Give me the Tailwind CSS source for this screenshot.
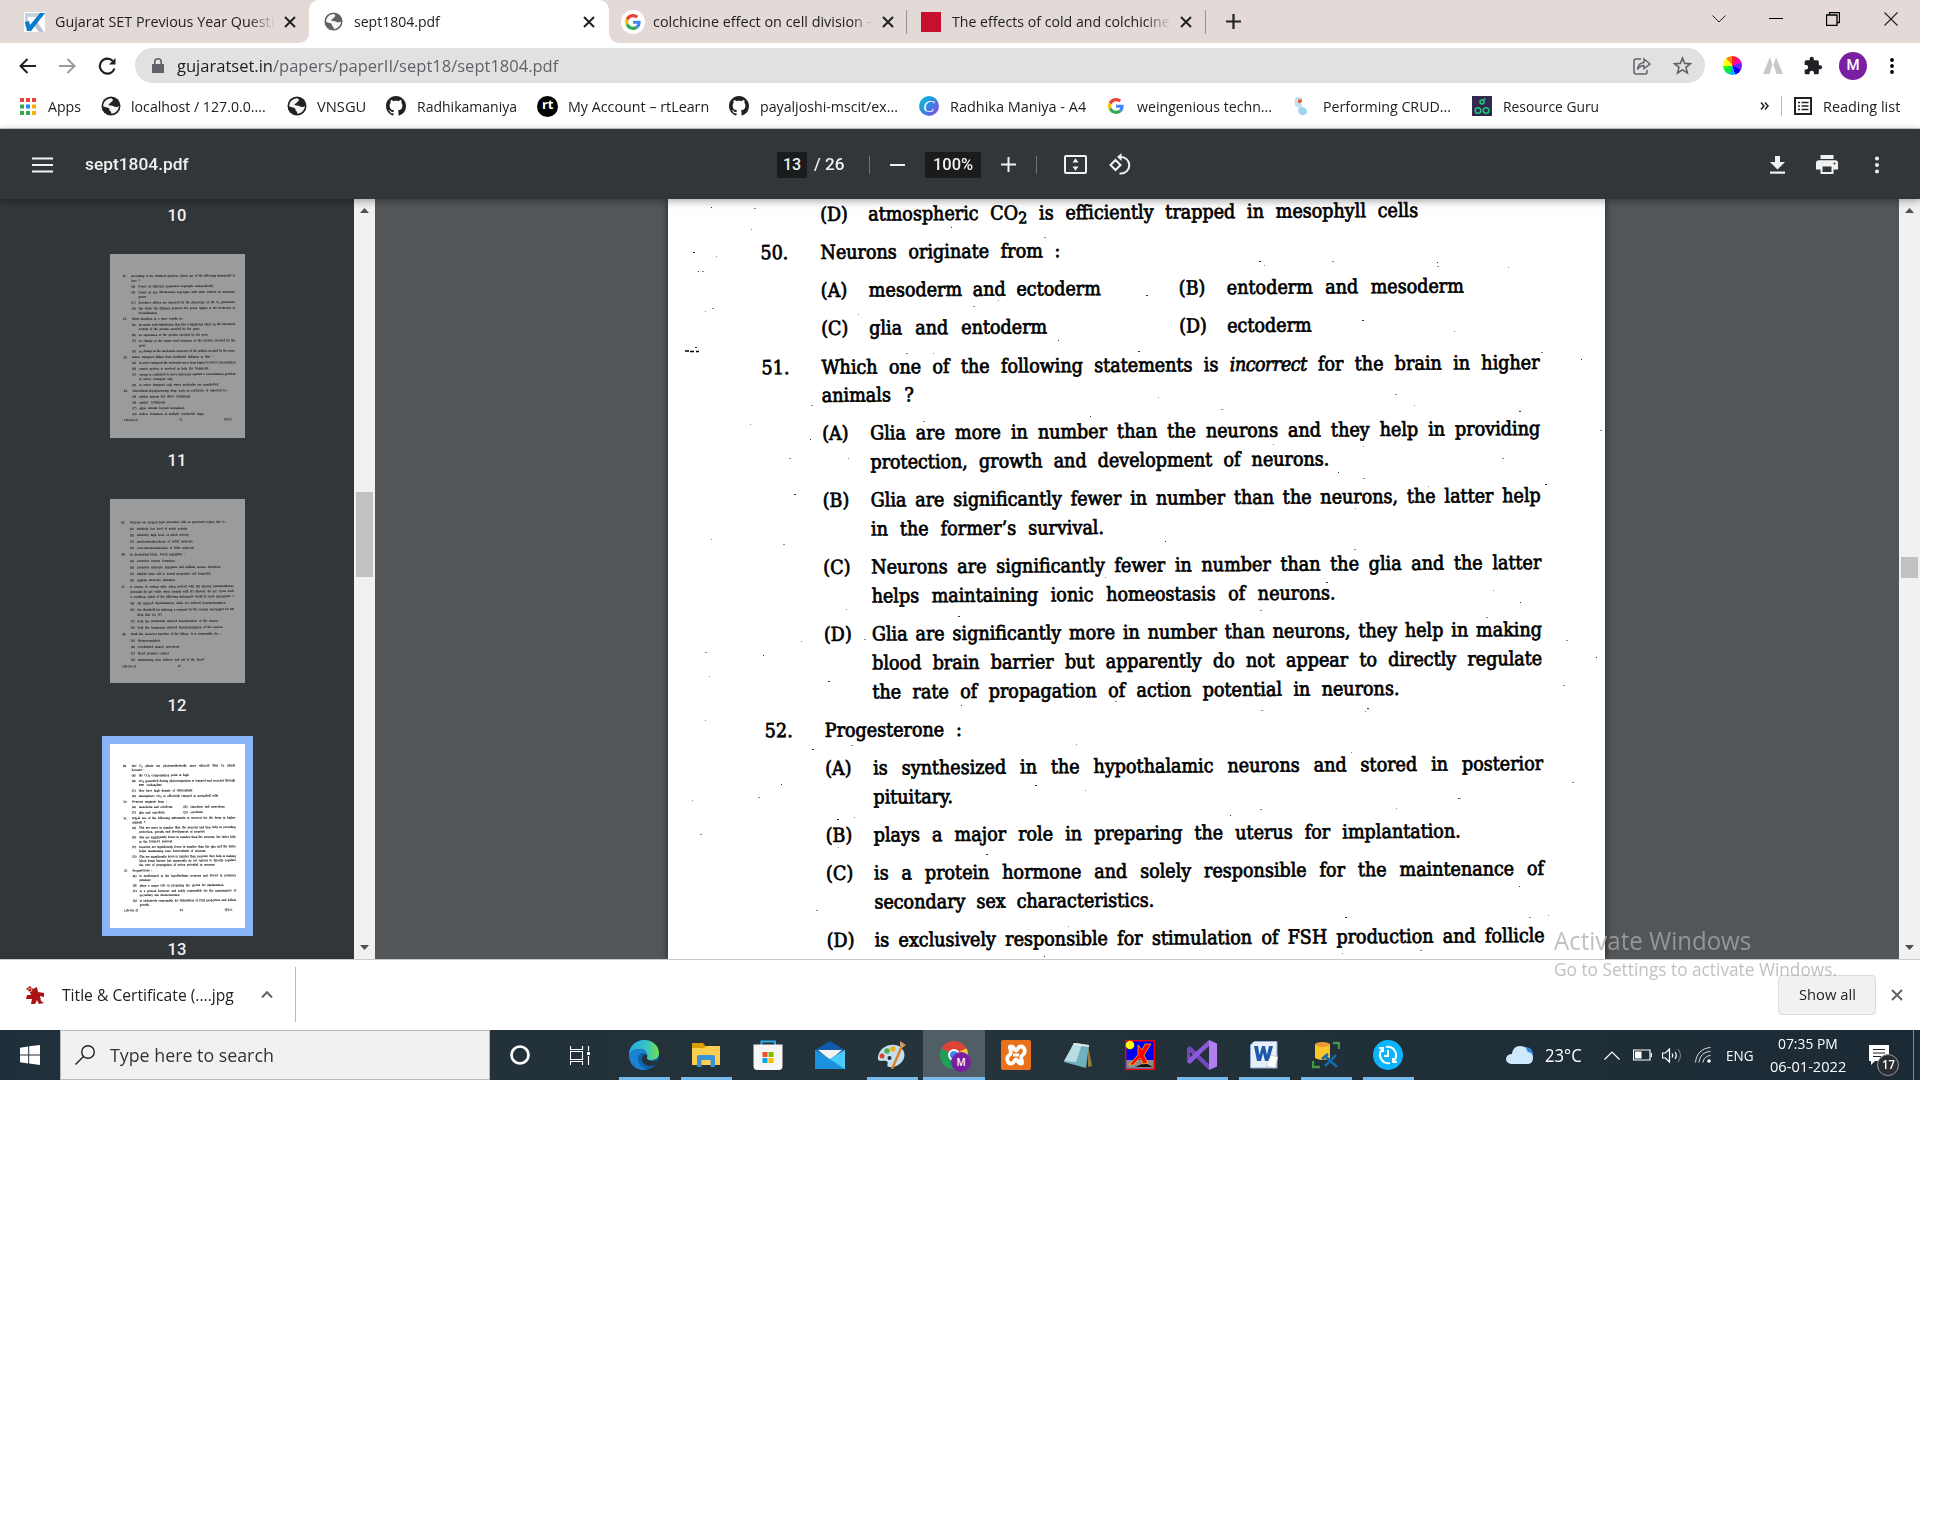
<!DOCTYPE html>
<html lang="en">
<head>
<meta charset="utf-8">
<title>sept1804.pdf</title>
<script src="https://cdn.jsdelivr.net/npm/@tailwindcss/browser@4"></script>
</head>
<body class="bg-white font-['Open_Sans',sans-serif] text-[#202124]">
<svg class="hidden">
  <symbol id="x" viewBox="0 0 12 12"><path d="M1 1L11 11M11 1L1 11" stroke="currentColor" stroke-width="2" fill="none"/></symbol>
  <symbol id="globe" viewBox="0 0 20 20"><circle cx="10" cy="10" r="9.5" fill="currentColor"/><path d="M10.500 2.200C12 3 12.500 4.500 11 5.500C9.500 6 9.800 7.500 8.300 7.700C7 8 7.500 9.500 9.500 9.500C12.500 9.500 13 11 15 11C16.500 11 17.500 10.500 17.900 10C17.800 14 14.500 17.500 10.500 17.800C10 17 10.500 16 9.300 15.300C8 14.500 9 13 7.500 12C5.800 11 3.500 11.300 2.200 10.200C2.200 6 5.700 2.200 10.500 2.200Z" fill="#fff" opacity=".95"/><path d="M12.500 3.500C15 4.300 17 6.500 17.300 8.700C15 9.500 14.500 8 13 7.800C11.600 7.500 13.500 5.500 12.500 3.500Z" fill="currentColor"/></symbol>
  <symbol id="github" viewBox="0 0 16 16"><path fill="currentColor" d="M8 0C3.580 0 0 3.580 0 8c0 3.540 2.290 6.530 5.470 7.590.4.070.55-.17.55-.38 0-.19-.01-.82-.01-1.490-2.010.37-2.530-.49-2.690-.94-.09-.23-.48-.94-.82-1.130-.28-.15-.68-.52-.01-.53.63-.01 1.080.58 1.230.82.72 1.210 1.870.87 2.330.66.07-.52.28-.87.51-1.070-1.780-.2-3.640-.89-3.640-3.950 0-.87.31-1.590.82-2.150-.08-.2-.36-1.020.08-2.120 0 0 .67-.21 2.200.82.64-.18 1.320-.27 2-.27s1.360.09 2 .27c1.530-1.040 2.200-.82 2.200-.82.44 1.100.16 1.920.08 2.120.51.56.82 1.270.82 2.150 0 3.070-1.870 3.750-3.650 3.950.29.25.54.73.54 1.480 0 1.070-.01 1.930-.01 2.200 0 .21.15.46.55.38A8.010 8.010 0 0 0 16 8c0-4.420-3.580-8-8-8z"/></symbol>
  <symbol id="google" viewBox="0 0 48 48"><path fill="#EA4335" d="M24 9.500c3.540 0 6.710 1.220 9.210 3.600l6.850-6.850C35.900 2.380 30.470 0 24 0 14.620 0 6.510 5.380 2.560 13.220l7.980 6.190C12.430 13.720 17.740 9.500 24 9.500z"/><path fill="#4285F4" d="M46.980 24.550c0-1.570-.15-3.090-.38-4.550H24v9.020h12.940c-.58 2.960-2.260 5.480-4.780 7.180l7.730 6c4.510-4.180 7.090-10.360 7.090-17.650z"/><path fill="#FBBC05" d="M10.530 28.590c-.48-1.450-.76-2.990-.76-4.590s.27-3.140.76-4.590l-7.980-6.190C.92 16.460 0 20.120 0 24c0 3.880.92 7.540 2.560 10.780l7.970-6.190z"/><path fill="#34A853" d="M24 48c6.480 0 11.930-2.130 15.890-5.810l-7.730-6c-2.150 1.450-4.920 2.300-8.160 2.300-6.260 0-11.570-4.220-13.470-9.910l-7.980 6.190C6.510 42.620 14.620 48 24 48z"/></symbol>
  <symbol id="puzzle" viewBox="0 0 24 24"><path fill="currentColor" d="M20.500 11H19V7c0-1.100-.9-2-2-2h-4V3.500a2.500 2.500 0 0 0-5 0V5H4c-1.100 0-2 .9-2 2v3.800h1.500a2.700 2.700 0 0 1 0 5.400H2V20c0 1.100.9 2 2 2h3.800v-1.500a2.700 2.700 0 0 1 5.400 0V22H17c1.100 0 2-.9 2-2v-4h1.500a2.500 2.500 0 0 0 0-5z"/></symbol>
</svg>

<div class="relative flex h-[1080px] w-[1920px] flex-col overflow-hidden">
  <!-- Tab strip -->
  <header class="flex h-[43px] shrink-0 items-center bg-[#e3dad7] text-[15px]">
    <div class="flex h-[43px] w-[309px] items-center bg-white"><div class="flex h-full w-full items-center rounded-br-[10px] bg-[#e3dad7] pl-6">
      <svg class="h-5 w-[21px]" viewBox="0 0 21 20"><rect width="21" height="20" fill="#fff"/><path d="M1 1h18v4h-15v10h-3z" fill="#c9d3da"/><path d="M8 11l4-3 8 12h-5z" fill="#b9c4cc"/><path d="M1 10l4-1 1 4L16 1h5L7 19H3z" fill="#0a7cc9"/></svg>
      <div class="ml-[10px] w-[220px] overflow-hidden [mask-image:linear-gradient(90deg,#000_88%,transparent)]"><div data-w="237">Gujarat SET Previous Year Question</div></div>
      <svg class="ml-[9px] size-3"><use href="#x"/></svg></div>
    </div>
    <div class="h-[43px] w-[300px] bg-[#e3dad7]"><div class="flex h-full items-center rounded-t-[10px] bg-white pl-[15px]">
      <svg class="size-[19px] text-[#5f6368]"><use href="#globe"/></svg>
      <div class="ml-[11px]" data-w="86">sept1804.pdf</div>
      <svg class="ml-[143px] size-3"><use href="#x"/></svg></div>
    </div>
    <div class="h-[43px] w-[298px] bg-white"><div class="flex h-full items-center rounded-bl-[10px] border-[#9b9390] bg-[#e3dad7] pl-[12px]">
      <span class="flex size-6 items-center justify-center rounded-full bg-white"><svg class="size-4"><use href="#google"/></svg></span>
      <div class="ml-[8px] w-[220px] overflow-hidden [mask-image:linear-gradient(90deg,#000_90%,transparent)]"><div data-w="218">colchicine effect on cell division -</div></div>
      <svg class="ml-[9px] size-3"><use href="#x"/></svg>
      <i class="ml-[12px] h-6 w-px bg-[#9b9390]"></i></div>
    </div>
    <div class="flex h-[43px] w-[299px] items-center pl-[14px]">
      <i class="size-5 bg-[#c8102e]"></i>
      <div class="ml-[11px] w-[219px] overflow-hidden [mask-image:linear-gradient(90deg,#000_88%,transparent)]"><div data-w="218">The effects of cold and colchicine</div></div>
      <svg class="ml-[9px] size-3"><use href="#x"/></svg>
      <i class="ml-[13px] h-6 w-px bg-[#9b9390]"></i>
    </div>
    <svg class="ml-5 size-[15px]" viewBox="0 0 15 15"><path d="M7.500 0V15M0 7.500H15" stroke="#202124" stroke-width="2.200"/></svg>
    <svg class="ml-[471px] h-2 w-[14px] -translate-y-[3px]" viewBox="0 0 14 8"><path d="M.5.500L7 7L13.500.5" fill="none" stroke="#222"/></svg>
    <i class="ml-[43px] h-px w-[14px] -translate-y-[3px] bg-black"></i>
    <svg class="ml-[43px] size-[14px] -translate-y-[3px]" viewBox="0 0 14 14"><path d="M3.500 3V.5H13.500V10.500H11M.5 3H11V13.500H.5Z" fill="none" stroke="#000" stroke-width="1.300"/></svg>
    <svg class="ml-[44px] size-[14px] -translate-y-[3px]" viewBox="0 0 14 14"><path d="M.5.500L13.500 13.500M13.500.5L.5 13.500" stroke="#222" stroke-width="1.100"/></svg>
  </header>

  <!-- Address bar -->
  <div class="flex h-[45px] shrink-0 items-center pl-[19px]">
    <svg class="h-4 w-[17px]" viewBox="0 0 17 16"><path d="M17 8H1.500M8.500 1L1.500 8L8.500 15" fill="none" stroke="#202124" stroke-width="2"/></svg>
    <svg class="ml-[23px] h-4 w-[17px]" viewBox="0 0 17 16"><path d="M0 8H15.500M8.500 1L15.500 8L8.500 15" fill="none" stroke="#9c9c9c" stroke-width="2"/></svg>
    <svg class="ml-[22px] size-[18px]" viewBox="0 0 18 18"><path d="M16.500 11.500A7.500 7.500 0 1 1 14.800 4" fill="none" stroke="#202124" stroke-width="2.200"/><path d="M17.500 1V7.500H11Z" fill="#202124"/></svg>
    <div class="ml-[19px] flex h-[35px] w-[1570px] items-center rounded-full bg-[#e1e1e1] pl-[17px] text-[17px]">
      <svg class="h-[15px] w-3" viewBox="0 0 12 15"><path d="M0 6H12V15H0Z" fill="#5f6368"/><path d="M2.800 6V4a3.200 3.200 0 0 1 6.400 0V6" fill="none" stroke="#5f6368" stroke-width="1.600"/></svg>
      <div class="ml-[13px] text-[#5f6368]" data-w="381"><span class="text-[#202124]">gujaratset.in</span>/papers/paperII/sept18/sept1804.pdf</div>
      <svg class="ml-[1075px] size-[18px]" viewBox="0 0 18 18"><path d="M8 2H3Q1 2 1 4V15Q1 17 3 17H12Q14 17 14 15V13" fill="none" stroke="#5f6368" stroke-width="1.500"/><path d="M4.500 12.500Q5 6 11 5.500V2L17 7L11 11.500V8.500Q7 8.500 4.500 12.500Z" fill="none" stroke="#5f6368" stroke-width="1.400"/></svg>
      <svg class="ml-[22px] size-[19px]" viewBox="0 0 24 24"><path d="M12 2.500L14.700 9.300L22 9.700L16.400 14.400L18.200 21.500L12 17.500L5.800 21.500L7.600 14.400L2 9.700L9.300 9.300Z" fill="none" stroke="#5f6368" stroke-width="2"/></svg>
    </div>
    <span class="relative ml-[18px] size-[19px] rounded-full bg-[conic-gradient(#f22_0_8%,#f0a_8%_20%,#62f_20%_33%,#00e_33%_45%,#0af_45%_55%,#0e4_55%_68%,#3f0_68%_75%,#ff0_75%_88%,#f80_88%)]"></span>
    <svg class="ml-[21px] h-[17px] w-5" viewBox="0 0 20 17"><path d="M0 17L7 0L9.500 8L6.500 17ZM10.500 8L13 0L20 17H13.500Z" fill="#c9c9c9"/></svg>
    <svg class="ml-[20px] size-5"><use href="#puzzle"/></svg>
    <span class="ml-[16px] flex size-[28px] items-center justify-center rounded-full bg-[#7b1fa2] font-['Roboto'] text-[15px] font-medium text-white">M</span>
    <svg class="ml-[23px] h-4 w-1" viewBox="0 0 4 16"><circle cx="2" cy="2" r="1.900"/><circle cx="2" cy="8" r="1.900"/><circle cx="2" cy="14" r="1.900"/></svg>
  </div>

  <!-- Bookmarks -->
  <div class="flex h-[41px] shrink-0 items-center gap-[20.3px] border-b border-[#cfcfcf] pb-1 pl-[18px] text-[15px]">
    <div class="flex items-center gap-[10px]"><svg class="h-[17px] w-5" viewBox="0 0 20 17"><path d="M2 0h4v4h-4zM8 0h4v4h-4zM14 0h4v4h-4z" fill="#ea4335"/><path d="M2 6.500h4v4h-4zM2 13h4v4h-4zM8 13h4v4h-4z" fill="#34a853"/><path d="M8 6.500h4v4h-4z" fill="#1a8cff"/><path d="M14 6.500h4v4h-4zM14 13h4v4h-4z" fill="#fbaf00"/></svg><div data-w="33">Apps</div></div>
    <div class="flex items-center gap-[10px]"><svg class="size-5"><use href="#globe"/></svg><div data-w="135">localhost / 127.0.0....</div></div>
    <div class="flex items-center gap-[10px]"><svg class="size-5"><use href="#globe"/></svg><div data-w="49">VNSGU</div></div>
    <div class="flex items-center gap-[11px]"><svg class="size-5"><use href="#github"/></svg><div data-w="100">Radhikamaniya</div></div>
    <div class="flex items-center gap-[10px]"><span class="flex size-[21px] items-center justify-center rounded-full bg-black pb-0.5 text-[13px] font-bold text-white">rt</span><div data-w="141">My Account – rtLearn</div></div>
    <div class="flex items-center gap-[11px]"><svg class="size-5"><use href="#github"/></svg><div data-w="138">payaljoshi-mscit/ex...</div></div>
    <div class="flex items-center gap-[11px]"><span class="flex size-5 items-center justify-center rounded-full bg-linear-to-br from-[#00c4cc] via-[#2d86e0] to-[#7d2ae8] font-['Liberation_Serif'] text-[17px] leading-none text-white italic">C</span><div data-w="136">Radhika Maniya - A4</div></div>
    <div class="flex items-center gap-[11px]"><svg class="h-4 w-5"><use href="#google"/></svg><div data-w="135">weingenious techn...</div></div>
    <div class="flex items-center gap-[11px]"><svg class="size-5" viewBox="0 0 20 20"><path d="M3 5Q2 1 6 1T10 5L9 7Q13 12 7 12Q1 10 3 5" fill="#bfe3f5"/><path d="M6 3l2 1 1-2 1 3-1 2h-3z" fill="#e2603a"/><path d="M6 13Q11 9 14 13T12 19Q6 20 6 13" fill="#9fd4f3"/></svg><div data-w="128">Performing CRUD...</div></div>
    <div class="flex items-center gap-[11px]"><svg class="size-5" viewBox="0 0 20 20"><rect width="20" height="20" fill="#35284e"/><g fill="none" stroke="#19c97b" stroke-width="1.500"><circle cx="10" cy="6" r="2"/><path d="M11.500 4.500L13 2.500"/><circle cx="6" cy="14.500" r="2.800"/><circle cx="14" cy="14.500" r="2.800"/></g></svg><div data-w="96">Resource Guru</div></div>
    <svg class="ml-[141px] h-2 w-[9px]" viewBox="0 0 9 8"><path d="M1 .5L4 4L1 7.500M5 .5L8 4L5 7.500" fill="none" stroke="#202124" stroke-width="1.500"/></svg>
    <i class="-mx-2 h-5 w-px bg-[#bbb]"></i>
    <div class="-ml-px flex items-center gap-[11px]"><svg class="size-[18px]" viewBox="0 0 18 18"><path d="M1 1H17V17H1Z" fill="none" stroke="#202124" stroke-width="2"/><path d="M4 5.500h2M4 9h2M4 12.500h2M7.500 5.500h7M7.500 9h7M7.500 12.500h7" stroke="#202124" stroke-width="1.600"/></svg><div data-w="77">Reading list</div></div>
  </div>

  <!-- PDF toolbar -->
  <div class="relative z-10 flex h-[70px] shrink-0 items-center bg-[#323639] pt-px pl-8 font-['Roboto',sans-serif] text-[17px] font-medium text-[#f1f1f1] shadow-[0_2px_8px_rgba(0,0,0,.35)]">
    <svg class="h-4 w-[21px]" viewBox="0 0 21 16"><path d="M0 1.500H21M0 8H21M0 14.500H21" stroke="#f1f1f1" stroke-width="2.200"/></svg>
    <div class="ml-8" data-w="104">sept1804.pdf</div>
    <div class="ml-[588px] flex h-[26px] w-[30px] items-center justify-center bg-[#191b1c] text-[16px]"><div data-w="18">13</div></div>
    <div class="ml-[7px] text-[16px]" data-w="30">/ 26</div>
    <i class="ml-[25px] h-[18px] w-px bg-[#70747a]"></i>
    <i class="ml-5 h-[2px] w-[15px] bg-[#f1f1f1]"></i>
    <div class="ml-5 flex h-[26px] w-14 items-center justify-center bg-[#191b1c] text-[16px]"><div data-w="40">100%</div></div>
    <svg class="ml-5 size-[15px]" viewBox="0 0 15 15"><path d="M7.500 0V15M0 7.500H15" stroke="#f1f1f1" stroke-width="2"/></svg>
    <i class="ml-5 h-[18px] w-px bg-[#70747a]"></i>
    <svg class="ml-[27px] h-[19px] w-[23px]" viewBox="0 0 23 19"><rect x="1" y="1" width="21" height="17" rx="1" fill="none" stroke="#f1f1f1" stroke-width="2"/><path d="M11.500 3.300L14.500 7.500H8.500ZM11.500 15.700L14.500 11.500H8.500Z" fill="#f1f1f1"/></svg>
    <svg class="ml-[21px] size-[23px]" viewBox="0 0 23 23"><path d="M7.500 7L12.500 12L7.500 17L2.500 12ZM11 4H13A8 8 0 1 1 13 20.500H11.500" fill="none" stroke="#f1f1f1" stroke-width="2"/><path d="M13.500 0V8L9 4Z" fill="#f1f1f1"/></svg>
    <svg class="ml-[639px] h-[18px] w-[15px]" viewBox="0 0 15 18"><path d="M5 0H10V6H15L7.500 13.500L0 6H5ZM0 15.500H15V17.800H0Z" fill="#f1f1f1"/></svg>
    <svg class="ml-[31px] h-[19px] w-[22px]" viewBox="0 0 22 19"><path d="M4.500 0H17.500V4H4.500ZM3 5.200H19Q22 5.200 22 8V14.500H17.500V19H4.500V14.500H0V8Q0 5.200 3 5.200Z" fill="#f1f1f1"/><path d="M6.500 11.500H15.500V17H6.500Z" fill="#323639"/><circle cx="18.500" cy="8.500" r="1" fill="#323639"/></svg>
    <svg class="ml-[37px] h-[18px] w-1" viewBox="0 0 4 18"><g fill="#f1f1f1"><circle cx="2" cy="2.500" r="2"/><circle cx="2" cy="9" r="2"/><circle cx="2" cy="15.500" r="2"/></g></svg>
  </div>

  <!-- PDF body -->
  <main class="flex h-[761px] shrink-0 border-b border-[#c9c9c9] bg-[#525659]">
    <aside class="flex w-[354px] shrink-0 flex-col items-center overflow-hidden bg-[#323639] font-['Roboto',sans-serif] text-[16.500px] leading-5 font-medium text-[#f1f1f1]">
      <div class="mt-[7px] h-5 shrink-0">10</div>
      <div class="mt-[28px] h-[184px] w-[135px] shrink-0 overflow-hidden bg-white opacity-50"><div class="h-[1278px] w-[937px] origin-top-left scale-[.144]" id="p11"></div></div>
      <div class="mt-[13px] h-5 shrink-0">11</div>
      <div class="mt-[28px] h-[184px] w-[135px] shrink-0 overflow-hidden bg-white opacity-50"><div class="h-[1278px] w-[937px] origin-top-left scale-[.144]" id="p12"></div></div>
      <div class="mt-[13px] h-5 shrink-0">12</div>
      <div class="mt-[20px] shrink-0 border-8 border-[#8ab4f8]"><div class="h-[184px] w-[135px] overflow-hidden bg-white"><div class="h-[1278px] w-[937px] origin-top-left scale-[.144]" id="t13"></div></div></div>
      <div class="mt-[4px] h-5 shrink-0">13</div>
    </aside>
    <div class="flex w-[21px] shrink-0 flex-col items-center justify-between bg-[#f1f1f1] py-[9px]">
      <svg class="h-[5px] w-[9px]" viewBox="0 0 9 5"><path d="M4.500 0L9 5H0Z" fill="#505050"/></svg>
      <i class="mb-[89px] h-[85px] w-[17px] bg-[#c1c1c1]"></i>
      <svg class="h-[5px] w-[9px]" viewBox="0 0 9 5"><path d="M4.500 5L9 0H0Z" fill="#505050"/></svg>
    </div>
    <div class="flex w-[1524px] shrink-0 overflow-hidden pl-[293px]">
      <div class="relative h-[760px] w-[937px] bg-white shadow-[0_0_7px_rgba(0,0,0,.6)]">
        <div class="h-[760px] overflow-hidden"><div class="-mt-[347px] h-[1278px] w-[937px]" id="p13"></div></div>
        <svg class="absolute top-0 left-0 h-[760px] w-[937px]" id="specks"></svg>
      </div>
    </div>
    <div class="flex w-[21px] shrink-0 flex-col items-center justify-between bg-[#f1f1f1] py-[9px]">
      <svg class="h-[5px] w-[9px]" viewBox="0 0 9 5"><path d="M4.500 0L9 5H0Z" fill="#505050"/></svg>
      <i class="mt-[-24px] h-[21px] w-[17px] bg-[#c1c1c1]"></i>
      <svg class="h-[5px] w-[9px]" viewBox="0 0 9 5"><path d="M4.500 5L9 0H0Z" fill="#505050"/></svg>
    </div>
  </main>

  <!-- Downloads -->
  <div class="flex h-[70px] shrink-0 items-center pb-px pl-[25px]">
    <svg class="size-5" viewBox="0 0 20 20"><path d="M1 4L5 1L8 4L12 2L13 7L19 8L19 12L15 11L16 16L19 18L14 19L12 15L10 19L6 19L7 14L1 14L2 10L6 10L5 7Z" fill="#a11"/><path d="M3 4l3-1 1 3-3 1z" fill="none" stroke="#e99"/></svg>
    <div class="ml-[17px] text-[16px]" data-w="172">Title &amp; Certificate (....jpg</div>
    <svg class="ml-[27px] h-[7px] w-3" viewBox="0 0 12 7"><path d="M1 6.500L6 1.200L11 6.500" fill="none" stroke="#5f6368" stroke-width="2"/></svg>
    <i class="ml-[22px] h-[55px] w-px bg-[#bbb]"></i>
    <div class="ml-[1482px] flex h-10 w-[98px] items-center justify-center rounded border border-[#dadce0] bg-[#f1f1f1] text-[15px]"><div data-w="57">Show all</div></div>
    <svg class="ml-[15px] size-3 text-[#5f6368]"><use href="#x"/></svg>
  </div>

  <!-- Taskbar -->
  <footer class="flex h-[50px] shrink-0 items-center bg-linear-to-r from-[#20303a] via-[#25333a] to-[#1b2a35] text-white">
    <div class="flex h-full w-[60px] items-center justify-center"><svg class="size-5" viewBox="0 0 20 20"><path d="M0 2.800L8.200 1.500V9.500H0ZM9.200 1.300L20 0V9.500H9.200ZM0 10.500H8.200V18.500L0 17.200ZM9.200 10.500H20V20L9.200 18.600Z" fill="#fff"/></svg></div>
    <div class="flex h-full w-[430px] items-center border border-[#b9b9b9] bg-[#f1f1f1] pl-[14px] text-[19px] text-[#333]">
      <svg class="size-5" viewBox="0 0 20 20"><circle cx="13" cy="7" r="6.300" fill="none" stroke="#222" stroke-width="1.400"/><path d="M8.500 11.500L.5 19.500" stroke="#222" stroke-width="1.400"/></svg>
      <div class="ml-[15px]" data-w="164">Type here to search</div>
    </div>
    <div class="flex h-full w-[61px] items-center justify-center pr-px"><svg class="size-5" viewBox="0 0 20 20"><circle cx="10" cy="10" r="8.500" fill="none" stroke="#fff" stroke-width="2.700"/></svg></div>
    <div class="flex h-full w-[62px] items-center justify-center pr-1"><svg class="h-[19px] w-5" viewBox="0 0 20 19"><path d="M.5 0V3.500H12.500V0M.5 19V15.500H12.500V19M.5 5.500H12.500V13.500H.5ZM18.500 0V5M18.500 10V19" fill="none" stroke="#fff" stroke-width="1.100"/><path d="M17 6h3v3h-3z" fill="#fff"/></svg></div>

    <div class="relative flex h-full w-[62px] items-center justify-center"><svg class="size-[30px]" viewBox="0 0 30 30"><defs><linearGradient id="e1"><stop stop-color="#2aa9e0"/><stop offset=".55" stop-color="#35c1c9"/><stop offset="1" stop-color="#6fe04a"/></linearGradient></defs><circle cx="15" cy="15" r="15" fill="#0d62ad"/><path d="M0 13C1 5 8 0 15 0C24 0 30 6 30 13C30 18 26 20 22 20C19 20 17 19 18 17C19 14 17 9 11 9C5 9 1 11 0 17Z" fill="url(#e1)"/><path d="M0 15C1 11 5 9 10 9C15 9 18 12 18.500 15.500C14 10 8 14 9 20C10 26 15 29 19 29.500C8 32 0 25 0 15Z" fill="#1c83d3"/><path d="M18.500 16C17 18 18 20.500 22 21C25 21.500 28 20 29 19.500C28 22 27 23.500 25.500 25C19 28 13 24 13 19C13 15 16 13 18.500 16Z" fill="#25323a"/></svg><i class="absolute bottom-0 h-[3px] w-[51px] bg-[#76b9ed]"></i></div>
    <div class="relative flex h-full w-[62px] items-center justify-center"><svg class="h-6 w-7" viewBox="0 0 28 24"><path d="M0 1Q0 0 1 0H11L13.500 3V6H0Z" fill="#dd9c00"/><path d="M0 5L12 5L14 3H28V22H0Z" fill="#fccf50"/><path d="M5 24V14Q5 12 7 12H21Q23 12 23 14V24H18.500V17H9.500V24Z" fill="#3a93d6"/></svg><i class="absolute bottom-0 h-[3px] w-[51px] bg-[#76b9ed]"></i></div>
    <div class="relative flex h-full w-[62px] items-center justify-center"><svg class="size-[30px]" viewBox="0 0 30 30"><path d="M8.500 6V1.500H22V6" fill="none" stroke="#2aa9ec" stroke-width="2"/><path d="M.5 4.500H29.500V26Q29.500 30 26 30H4Q.5 30 .5 26Z" fill="#f6f6f6"/><path d="M9.500 12h5v5h-5z" fill="#f25022"/><path d="M15.500 12h5v5h-5z" fill="#7fba00"/><path d="M9.500 18h5v5h-5z" fill="#00a4ef"/><path d="M15.500 18h5v5h-5z" fill="#ffb900"/></svg></div>
    <div class="relative flex h-full w-[62px] items-center justify-center"><svg class="h-7 w-[30px]" viewBox="0 0 30 28"><path d="M0 9L15 0L30 9L15 18Z" fill="#0f5ba8"/><path d="M3 9H27L15 19Z" fill="#f3f3f3"/><path d="M0 9L15 18L30 9V28H0Z" fill="#32b5f1"/><path d="M0 9L30 28H0Z" fill="#1c91e0"/><path d="M15 18L30 9V28Z" fill="#4dcbf8"/></svg></div>
    <div class="relative flex h-full w-[62px] items-center justify-center"><svg class="h-7 w-[30px]" viewBox="0 0 30 28"><path d="M1 16C2 8 10 3 18 4C25 5 29 11 27 17C25 23 18 27 12 26C8 25 13 21 9 20C6 19 0 22 1 16Z" fill="#c3e0f2"/><circle cx="5" cy="15" r="2.500" fill="#d9442f"/><circle cx="10" cy="10" r="2.700" fill="#4fb13a"/><circle cx="16" cy="8" r="2.700" fill="#f4b21b"/><circle cx="12.500" cy="17" r="2" fill="#25323a"/><path d="M15 28L25 5" stroke="#df7f20" stroke-width="2.500"/><path d="M23 0L29 4L25 7L23 5Z" fill="#c99a62"/></svg><i class="absolute bottom-0 h-[3px] w-[51px] bg-[#76b9ed]"></i></div>
    <div class="relative flex h-full w-[62px] items-center justify-center bg-[#525e66]"><span class="relative size-7 rounded-full bg-[conic-gradient(#db4437_0_17%,#fcc934_17%_50%,#1e9e58_50%_83%,#db4437_83%)]"><i class="absolute top-2 left-2 size-3 rounded-full border-2 border-white bg-[#4285f4]"></i></span><span class="absolute top-[22px] left-[28px] flex size-5 items-center justify-center rounded-full bg-[#7b1fa2] text-[10px] font-semibold">M</span><i class="absolute bottom-0 h-[3px] w-full bg-[#76b9ed]"></i></div>
    <div class="relative flex h-full w-[62px] items-center justify-center"><svg class="size-[30px]" viewBox="0 0 30 30"><rect width="30" height="30" rx="2" fill="#e9711c"/><path d="M10 6.500C13.500 6.500 13 10.500 15 10.500S16.500 6.500 20 6.500S25.500 12.500 21.500 15S23.500 23.500 20 23.500S17 19.500 15 19.500S13.500 23.500 10 23.500S4.500 17.500 8.500 15S6.500 6.500 10 6.500Z" fill="none" stroke="#fff" stroke-width="3.800"/><path d="M12 15H18" stroke="#fff" stroke-width="3"/></svg></div>
    <div class="relative flex h-full w-[62px] items-center justify-center"><svg class="h-[27px] w-7" viewBox="0 0 28 27"><path d="M24 3L28 24L24 25Z" fill="#9a7a3f"/><path d="M10 1L25 3L22 26L0 20Z" fill="#6fb0be"/><path d="M10 1L18 2L12 20L0 19Z" fill="#b9dde2"/><path d="M10 1L25 3L25 5L9 3Z" fill="#dfe7e9"/></svg></div>
    <div class="relative flex h-full w-[62px] items-center justify-center"><svg class="size-[30px]" viewBox="0 0 30 30"><rect x=".7" y=".7" width="28.600" height="28.600" fill="#0000f0" stroke="#f00" stroke-width="1.400"/><path d="M1.400 20H28.600V28.600H1.400Z" fill="#8b8b8b"/><circle cx="5" cy="5" r="4.300" fill="#ff0"/><path d="M10 27H28L20 23Z" fill="#111"/><path d="M13 5L17 10L20 4H26L19 15L23 23L18 24L15 18L8 25H4L13 15Z" fill="#f00" stroke="#ff0" stroke-width=".6"/></svg></div>
    <div class="relative flex h-full w-[62px] items-center justify-center"><svg class="size-[30px]" viewBox="0 0 30 30"><path d="M0 8L3 6L22 24V30L3 12V19L3 24L0 22Z" fill="#7446bd"/><path d="M0 22L3 24L22 6V0L3 17Z" fill="#8c57d6"/><path d="M22 0L30 3.500V26.500L22 30Z" fill="#b27ff0"/></svg><i class="absolute bottom-0 h-[3px] w-[51px] bg-[#76b9ed]"></i></div>
    <div class="relative flex h-full w-[62px] items-center justify-center"><svg class="size-7" viewBox="0 0 28 28"><path d="M4 .5H27V27H.5V4Z" fill="#e9eff8" stroke="#8fabd0"/><path d="M4 5H8L9.500 14L12 5H15L17 14L19 5H23L19 20H15L13 12L11 20H7Z" fill="#1d58a9"/><path d="M21 14L28 16L25 27L16 25Z" fill="#fff" stroke="#aac" stroke-width=".5"/></svg><i class="absolute bottom-0 h-[3px] w-[51px] bg-[#76b9ed]"></i></div>
    <div class="relative flex h-full w-[62px] items-center justify-center"><svg class="size-7" viewBox="0 0 28 28"><path d="M21 2H27V8M1 20V26H8" fill="none" stroke="#3f9a48" stroke-width="2.400"/><path d="M3 3V17Q10 21 18 17V3Z" fill="#f8c62c"/><ellipse cx="10.500" cy="3.500" rx="7.500" ry="2.500" fill="#ec9a36"/><path d="M13 25L24 14M13 15L25 26M10 18L16 13" stroke="#1668ad" stroke-width="2.600"/></svg><i class="absolute bottom-0 h-[3px] w-[51px] bg-[#76b9ed]"></i></div>
    <div class="relative flex h-full w-[62px] items-center justify-center"><svg class="size-[30px]" viewBox="0 0 30 30"><circle cx="15" cy="15" r="15" fill="#0db4fb"/><path d="M9 9.500A8.300 8.300 0 0 0 17 23M21 20.500A8.300 8.300 0 0 0 13 7M6 8H10V12M24 22H20V18M15 10V16H11" fill="none" stroke="#fff" stroke-width="2"/></svg><i class="absolute bottom-0 h-[3px] w-[51px] bg-[#76b9ed]"></i></div>

    <svg class="ml-[87px] h-5 w-7" viewBox="0 0 28 20"><path d="M18 2Q28 1 27 12L20 14Z" fill="#2f86d6"/><path d="M5 19Q0 18 0 13.500Q1 9 6 9Q7 1 14 1Q21 1 21.500 7Q27 7.500 27 13Q27 18.500 22 19Z" fill="#cfe8fb"/></svg>
    <div class="ml-[11px] text-[18px]" data-w="37">23°C</div>
    <svg class="ml-[22px] h-[9px] w-4" viewBox="0 0 16 9"><path d="M.5 8.500L8 1L15.500 8.500" fill="none" stroke="#fff" stroke-width="1.200"/></svg>
    <svg class="ml-[13px] h-3 w-[19px]" viewBox="0 0 19 12"><path d="M.5 1H17V11H.5ZM18.500 4V8" fill="none" stroke="#fff" stroke-width="1.200"/><path d="M2 2.500H8.500V9.500H2Z" fill="#fff"/></svg>
    <svg class="ml-[10px] h-[17px] w-5" viewBox="0 0 20 17"><path d="M.5 6H3.500L7.500 2V15L3.500 11H.5ZM10 6.500Q11.500 8.500 10 10.500M13 5Q15.500 8.500 13 12" fill="none" stroke="#fff" stroke-width="1.200"/><path d="M16 2Q21 8.500 16 15" fill="none" stroke="#888"/></svg>
    <svg class="ml-[13px] size-4" viewBox="0 0 16 16"><g fill="none" stroke="#ddd"><path d="M.5 15.500C1 7 7 1 15.500.5M4 15.500C4.500 9 9 4.500 15.500 4.500M8 15.500C8.500 11.500 11 9 15.500 8.500"/></g><circle cx="14" cy="14" r="1.800" fill="#fff"/></svg>
    <div class="ml-[15px] text-[15px]" data-w="28">ENG</div>
    <div class="ml-4 flex w-[76px] flex-col items-center text-[15px] leading-[23px]"><div data-w="60">07:35 PM</div><div data-w="76">06-01-2022</div></div>
    <div class="relative ml-[23px] h-[50px] w-[45px] border-r border-[#7e868b]"><svg class="absolute top-[15px] left-0 h-5 w-5" viewBox="0 0 20 20"><path d="M0 0H20V16H6L2 20V16H0Z" fill="#fff"/><path d="M4 4.500H16M4 8H16M4 11.500H12" stroke="#222"/></svg><span class="absolute top-[24px] left-[8px] flex size-[22px] items-center justify-center rounded-full border border-[#99a] bg-[#2b2d2f] text-[13px] font-semibold"><span data-w="13">17</span></span></div>
  </footer>

  <!-- Activation watermark -->
  <div class="pointer-events-none absolute top-[922px] left-[1554px] z-20 text-[#ababab]/75"><div class="text-[25px] leading-9" data-w="197">Activate Windows</div><div class="mt-px text-[18px] leading-5" data-w="283">Go to Settings to activate Windows.</div></div>
</div>

<script>
// Rows: [question number, option label, text, line width, optional right-hand [label, text, width]]; 0 width means a full justified line.
const life = n => ['foot', n];
const pages = {
  13: {top: 139.500, gap: 9.450, lh: 28.750, left: 92, rows: [
    ['49.','','The C<sub>4</sub> plants are photosynthetically more efficient than C<sub>3</sub> plants',0],['','','because :',88],
    ['','(A)','the CO<sub>2</sub> compensation point is high',348],['','(B)','CO<sub>2</sub> generated during photorespiration is trapped and recycled through',0],['','','PEP carboxylase',160],
    ['','(C)','they have high density of chloroplasts',372],['','(D)','atmospheric CO<sub>2</sub> is efficiently trapped in mesophyll cells',550],
    ['50.','','Neurons originate from :',240],['','(A)','mesoderm and ectoderm',232,['(B)','entoderm and mesoderm',237]],['','(C)','glia and entoderm',178,['(D)','ectoderm',84]],
    ['51.','','Which one of the following statements is <em>incorrect</em> for the brain in higher',0],['','','animals ?',92],
    ['','(A)','Glia are more in number than the neurons and they help in providing',0],['','','protection, growth and development of neurons.',459],
    ['','(B)','Glia are significantly fewer in number than the neurons, the latter help',0],['','','in the former’s survival.',233],
    ['','(C)','Neurons are significantly fewer in number than the glia and the latter',0],['','','helps maintaining ionic homeostasis of neurons.',464],
    ['','(D)','Glia are significantly more in number than neurons, they help in making',0],['','','blood brain barrier but apparently do not appear to directly regulate',0],['','','the rate of propagation of action potential in neurons.',527],
    ['52.','','Progesterone :',137],['','(A)','is synthesized in the hypothalamic neurons and stored in posterior',0],['','','pituitary.',86],
    ['','(B)','plays a major role in preparing the uterus for implantation.',587],['','(C)','is a protein hormone and solely responsible for the maintenance of',0],['','','secondary sex characteristics.',280],
    ['','(D)','is exclusively responsible for stimulation of FSH production and follicle',0],['','','growth.',66],life('13')]},
  11: {top: 139, gap: 9, lh: 31.500, left: 90, rows: [
    ['41.','','According to the classical genetics, which one of the following statements is',0],['','','true ?',58],
    ['','(A)','Genes on different autosomes segregate independently',522],['','(B)','Genes on one chromosome segregate with same pattern as autosome',0],['','','genes',54],
    ['','(C)','Recessive alleles are detected by the phenotype of the F<sub>1</sub> generation',0],['','(D)','The closer the distance between the genes, higher is the frequency of',0],['','','recombination',134],
    ['42.','','Silent mutation in a gene results in :',366],['','(A)','an amino acid substitution that has a significant effect on the functional',0],['','','activity of the protein encoded by the gene.',425],
    ['','(B)','no expression of the protein encoded by the gene.',486],['','(C)','no change in the amino acid sequence of the protein encoded by the',0],['','','gene.',48],
    ['','(D)','no change in the nucleotide sequence of the mRNA encoded by the gene.',0],
    ['43.','','Active transport differs from facilitated diffusion in that :',560],['','(A)','in active transport the molecules move from higher to lower concentration',0],['','(B)','carrier protein is involved in both the transports',480],
    ['','(C)','energy is consumed to move molecules against a concentration gradient',0],['','','in active transport only',232],['','(D)','in active transport only water molecules are transported',550],
    ['44.','','Microtubule-depolymerizing drug, such as colchicine, is expected to :',665],['','(A)','inhibit mitosis but allow cytokinesis',352],['','(B)','inhibit cytokinesis',178],['','(C)','allow mitosis beyond metaphase',313],['','(D)','induce formation of multiple contractile rings',444],life('11')]},
  12: {top: 146, gap: 9.500, lh: 35.200, left: 79, rows: [
    ['45.','','Neurons are formed from precursor cells in proneural region due to :',677],['','(A)','relatively low level of notch activity',350],['','(B)','relatively high level of notch activity',362],['','(C)','inactivation/knock-out of notch molecule',388],['','(D)','over-activation/knock-in of delta molecule',396],
    ['46.','','In developing brain, Notch signalling :',378],['','(A)','promotes neuron formation',262],['','(B)','promotes astrocyte formation and inhibits neuron formation',578],['','(C)','inhibits stem cell to neural progenitor cell formation',510],['','(D)','inhibits astrocyte formation',264],
    ['47.','','A neuron at resting state when treated with (X) showed transmembrane',-1],['','q','potential 80 mV, while when treated with (Y) showed -90 mV. Given such',-1],['','q','a condition, which of the following statements would be most appropriate ?',-1],
    ['','(A)','(X) induced depolarization, while (Y) induced hyperpolarization',610],['','(B)','the threshold for inducing a response by the neuron was higher for (X)',0],['','','than that for (Y)',166],['','(C)','both the treatments induced depolarization of the neuron',560],['','(D)','both the treatments induced hyperpolarization of the neuron',590],
    ['48.','','Mark the incorrect function of the kidney. It is responsible for :',624],['','(A)','thermoregulation',164],['','(B)','coordinated muscle movement',288],['','(C)','blood pressure control',214],['','(D)','maintaining ionic balance and pH of the blood',458],life('12')]}
};
function line(t, w) {
  const d = document.createElement('div');
  d.className = 'whitespace-nowrap [text-align-last:justify] [&_sub]:bottom-[-4px] [&_sub]:text-[16px] [&_em]:tracking-tight shrink-0';
  d.style.width = w + 'px'; d.innerHTML = t; return d;
}
function draw(id, n) {
  const p = pages[n], root = document.getElementById(id), box = document.createElement('div');
  box.className = "text-left text-black text-[19.5px] font-normal font-['DejaVu_Serif_Condensed','DejaVu_Serif',serif] [font-stretch:condensed] [-webkit-text-stroke:.7px_#000] [transform-origin:0_349px] [transform:matrix(1,-.0069,.009,1,0,0)] w-[937px] h-[1278px]";
  box.style.paddingTop = p.top + 'px'; box.style.paddingLeft = p.left + 'px'; box.style.lineHeight = p.lh + 'px';
  let q = false;
  p.rows.forEach((r, i) => {
    const row = document.createElement('div'); row.className = 'flex relative'; row.style.height = p.lh + 'px';
    if (r[0] === 'foot') {
      row.style.marginTop = p.gap + 'px';
      row.append(line('Life-Sci.-II', 100)); const m = line(r[1], 24); m.style.marginLeft = '284px'; row.append(m);
      if (r[1] !== '12') { const e = line('[P.T.O.', 82); e.style.marginLeft = '290px'; row.append(e); }
      box.append(row); return;
    }
    if (i && (r[0] || r[1]) && r[1] !== 'q') row.style.marginTop = p.gap + 'px';
    if (r[0]) q = true; else if (r[1] && r[1] !== 'q') q = false;
    row.append(line(r[0], 60));
    if (r[0]) row.firstChild.style.cssText = 'width:27px;margin-right:33px';
    if (!q) { const l = line(r[1], 29); l.style.marginRight = '19px'; row.append(l); }
    row.append(line(r[2], r[3] > 0 ? r[3] : q ? 718 : 670));
    if (r[4]) {
      const l = line(r[4][0], 29); l.style.marginLeft = (310 - r[3]) + 'px'; l.style.marginRight = '19px';
      row.append(l, line(r[4][1], r[4][2]));
    }
    box.append(row);
  });
  root.append(box);
}
draw('p11', 11); draw('p12', 12); draw('t13', 13); draw('p13', 13);

// Scanner dust on the page.
const dust = [[43,8],[86,9],[83,30],[25,53],[48,57],[34,72],[30,72],[44,109],[37,112],[27,148],[82,225],[143,206],[142,240],[121,259],[180,259],[126,295],[43,340],[115,345],[283,28],[376,38],[330,101],[478,96],[190,115],[305,107],[390,141],[238,154],[265,154],[470,152],[490,198],[553,210],[422,217],[255,222],[605,245],[591,62],[596,66],[664,62],[769,63],[769,67],[840,68],[694,121],[786,132],[873,153],[913,160],[727,195],[746,206],[851,212],[695,247],[834,259],[670,273],[695,279],[760,287],[877,285],[687,309],[932,231],[497,342],[686,350],[825,391],[658,383],[437,378],[592,411],[852,403],[818,418],[178,410],[290,417],[133,442],[196,440],[95,456],[37,453],[41,477],[160,482],[500,481],[447,502],[293,506],[593,511],[37,521],[699,509],[697,512],[898,441],[928,458],[895,486],[683,553],[144,550],[408,545],[183,546],[113,585],[90,598],[24,601],[367,586],[417,591],[904,583],[790,599],[791,599],[728,609],[169,620],[186,618],[592,610],[562,616],[32,635],[170,648],[318,655],[400,727],[148,711],[851,687],[861,718],[880,716],[677,718],[674,754],[752,751],[376,757]];
document.getElementById('specks').innerHTML = dust.map(([x, y], i) => `<rect x="${x}" y="${y}" width="${1 + i % 2}" height="1" fill="#000" opacity="${i % 3 ? .45 : .8}"/>`).join('') + '<path d="M17 152h4M22 152.500h4M28 152.500h3" stroke="#000" stroke-width="1.600"/>';

// Fit interface labels to fixed widths, again whenever their natural width changes.
const fit = s => { if (s.offsetWidth) s.style.transform = `scaleX(${s.parentElement.dataset.w / s.offsetWidth})`; };
const watcher = new ResizeObserver(entries => entries.forEach(e => fit(e.target)));
document.querySelectorAll('[data-w]').forEach(el => {
  const s = document.createElement('span');
  s.className = 'inline-block whitespace-nowrap origin-left';
  while (el.firstChild) s.append(el.firstChild);
  el.append(s);
  el.style.width = el.dataset.w + 'px'; el.style.flexShrink = 0; el.style.whiteSpace = 'nowrap';
  fit(s);
  watcher.observe(s);
});
</script>
</body>
</html>
